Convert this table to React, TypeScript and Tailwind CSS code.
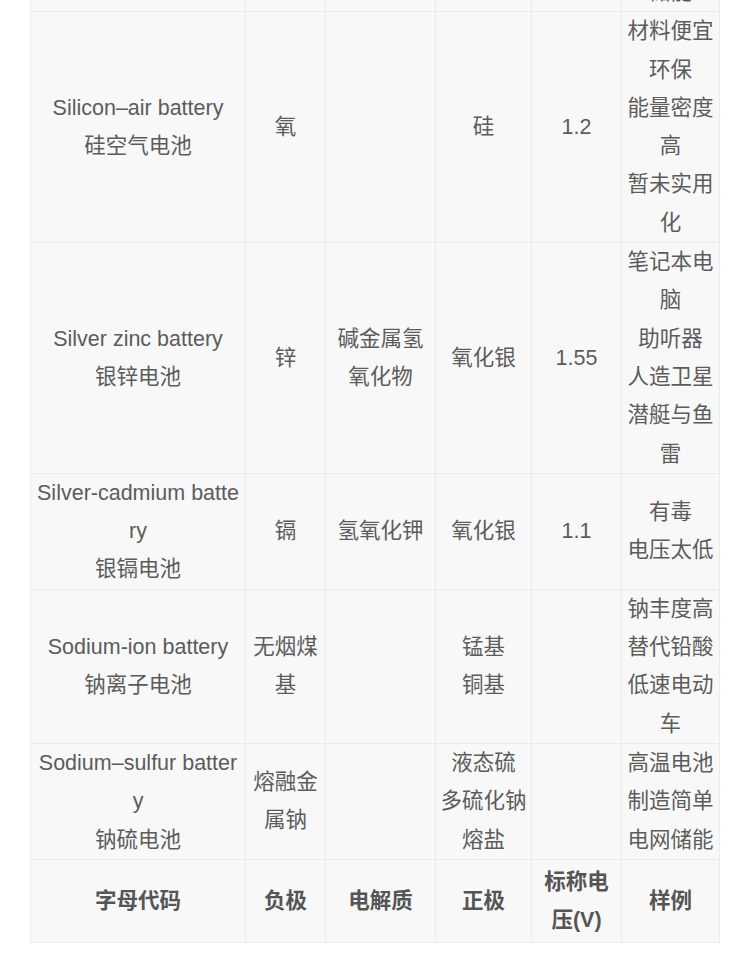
type Row = {
  name?: string;
  zh?: string;
  cells: string[][];
};

const rows: Row[] = [
  {
    name: "Silicon–air battery",
    zh: "硅空气电池",
    cells: [["氧"], [], ["硅"], ["1.2"], ["材料便宜", "环保", "能量密度高", "暂未实用化"]],
  },
  {
    name: "Silver zinc battery",
    zh: "银锌电池",
    cells: [["锌"], ["碱金属氢氧化物"], ["氧化银"], ["1.55"], ["笔记本电脑", "助听器", "人造卫星", "潜艇与鱼雷"]],
  },
  {
    name: "Silver-cadmium battery",
    zh: "银镉电池",
    cells: [["镉"], ["氢氧化钾"], ["氧化银"], ["1.1"], ["有毒", "电压太低"]],
  },
  {
    name: "Sodium-ion battery",
    zh: "钠离子电池",
    cells: [["无烟煤基"], [], ["锰基", "铜基"], [], ["钠丰度高", "替代铅酸", "低速电动车"]],
  },
  {
    name: "Sodium–sulfur battery",
    zh: "钠硫电池",
    cells: [["熔融金属钠"], [], ["液态硫", "多硫化钠", "熔盐"], [], ["高温电池", "制造简单", "电网储能"]],
  },
];

const headers = ["字母代码", "负极", "电解质", "正极", "标称电压(V)", "样例"];

// body cells: centered, break anywhere like the source page does
const td = "border border-[#ebebeb] px-[4px] py-0 text-center align-middle break-all";

export default function App() {
  return (
    <div
      className="w-[750px] h-[963px] overflow-hidden bg-white text-[#5c5c5c] text-[21.5px] leading-[38.3px]"
      style={{ fontFamily: '"Liberation Sans", "Noto Sans CJK SC", sans-serif' }}
    >
      <table className="ml-[30px] -mt-[28px] w-[689px] table-fixed border-collapse bg-[#f8f8f8]">
        <colgroup>
          <col className="w-[215px]" />
          <col className="w-[80px]" />
          <col className="w-[110px]" />
          <col className="w-[96px]" />
          <col className="w-[90px]" />
          <col className="w-[98px]" />
        </colgroup>
        <tbody>
          <tr>
            <td className={td}>&nbsp;</td>
            <td className={td}></td>
            <td className={td}></td>
            <td className={td}></td>
            <td className={td}></td>
            <td className={td}>储能</td>
          </tr>
          {rows.map((r) => (
            <tr key={r.name}>
              <td className={td}>
                <div>{r.name}</div>
                <div>{r.zh}</div>
              </td>
              {r.cells.map((lines, i) => (
                <td key={i} className={td}>
                  {lines.map((l) => (
                    <div key={l}>{l}</div>
                  ))}
                </td>
              ))}
            </tr>
          ))}
          <tr>
            {headers.map((h) => (
              <th
                key={h}
                className="border border-[#ebebeb] px-[4px] py-[3px] text-center align-middle font-bold text-[#555] break-all"
              >
                {h}
              </th>
            ))}
          </tr>
        </tbody>
      </table>
    </div>
  );
}
